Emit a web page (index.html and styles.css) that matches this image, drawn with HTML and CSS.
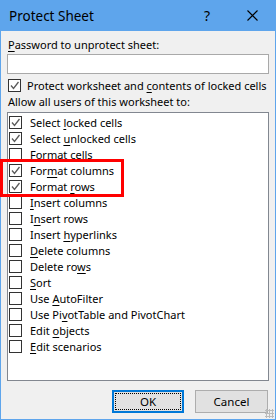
FILE: index.html
```html
<!DOCTYPE html>
<html lang="en">
<head>
    <meta charset="UTF-8">
    <title>Protect Sheet</title>
    <link rel="stylesheet" href="styles.css">
</head>
<body>
    <div class="window">
        <div class="titlebar">
            <span class="title">Protect Sheet</span>
            <span class="help">?</span>
            <svg class="close" width="11" height="11" viewBox="0 0 11 11">
                <path d="M0.5 0.5 L10.5 10.5 M10.5 0.5 L0.5 10.5" stroke="#000" stroke-width="1.1" fill="none"/>
            </svg>
        </div>

        <div class="content">
            <label class="field-label"><u>P</u>assword to unprotect sheet:</label>
            <div class="password"></div>

            <div class="check-row main-check">
                <span class="box"><svg width="11" height="11"><path d="M2 5.5 L4.5 8.5 L9.5 2" stroke="#5a5a5a" stroke-width="1.3" fill="none"/></svg></span>
                <span>Protect worksheet and <u>c</u>ontents of locked cells</span>
            </div>

            <div class="field-label allow">Allow all users of this worksheet to:</div>

            <div class="listbox">
                <div class="check-row"><span class="box"><svg width="11" height="11"><path d="M2 5.5 L4.5 8.5 L9.5 2" stroke="#5a5a5a" stroke-width="1.3" fill="none"/></svg></span><span>Select <u>l</u>ocked cells</span></div>
                <div class="check-row"><span class="box"><svg width="11" height="11"><path d="M2 5.5 L4.5 8.5 L9.5 2" stroke="#5a5a5a" stroke-width="1.3" fill="none"/></svg></span><span>Select <u>u</u>nlocked cells</span></div>
                <div class="check-row"><span class="box"></span><span>Format cells</span></div>
                <div class="highlight">
                    <div class="check-row"><span class="box"><svg width="11" height="11"><path d="M2 5.5 L4.5 8.5 L9.5 2" stroke="#5a5a5a" stroke-width="1.3" fill="none"/></svg></span><span>For<u>m</u>at columns</span></div>
                    <div class="check-row"><span class="box"><svg width="11" height="11"><path d="M2 5.5 L4.5 8.5 L9.5 2" stroke="#5a5a5a" stroke-width="1.3" fill="none"/></svg></span><span>Format <u>r</u>ows</span></div>
                </div>
                <div class="check-row"><span class="box"></span><span><u>I</u>nsert columns</span></div>
                <div class="check-row"><span class="box"></span><span>I<u>n</u>sert rows</span></div>
                <div class="check-row"><span class="box"></span><span>Insert <u>h</u>yperlinks</span></div>
                <div class="check-row"><span class="box"></span><span><u>D</u>elete columns</span></div>
                <div class="check-row"><span class="box"></span><span>Delete ro<u>w</u>s</span></div>
                <div class="check-row"><span class="box"></span><span><u>S</u>ort</span></div>
                <div class="check-row"><span class="box"></span><span>Use <u>A</u>utoFilter</span></div>
                <div class="check-row"><span class="box"></span><span>Use Pi<u>v</u>otTable and PivotChart</span></div>
                <div class="check-row"><span class="box"></span><span>Edit <u>o</u>bjects</span></div>
                <div class="check-row"><span class="box"></span><span><u>E</u>dit scenarios</span></div>
            </div>

            <div class="buttons">
                <button class="btn btn-default"><span>OK</span></button>
                <button class="btn">Cancel</button>
            </div>
        </div>
        <div class="grip"></div>
    </div>
</body>
</html>
```

FILE: styles.css
```css
body {
    margin: 0;
    font-family: "Noto Sans", sans-serif;
    font-size: 11px;
    color: #000;
}

.window {
    position: relative;
    width: 276px;
    height: 420px;
    box-sizing: border-box;
    background-color: #f0f0f0;
    border: 1px solid #5ea5ec;
    border-top: none;
}

.titlebar {
    height: 31px;
    background-color: #5ea5ec;
    display: flex;
    align-items: center;
    padding: 0 0 0 8px;
}

.title {
    font-size: 13.5px;
    flex: 1;
}

.help {
    font-size: 14px;
    width: 43px;
}

.close {
    margin-right: 17px;
}

.content {
    padding: 6px 6px 0 6px;
}

.field-label {
    display: block;
    line-height: 16px;
    padding-left: 1px;
    white-space: nowrap;
}

.password {
    margin-top: 1px;
    height: 18px;
    background-color: #fff;
    border: 1px solid #a9a9a9;
}

u {
    text-decoration-thickness: 1px;
    text-underline-offset: 2px;
}

.check-row {
    display: flex;
    align-items: center;
    height: 16px;
    gap: 8px;
    white-space: nowrap;
}

.main-check {
    margin-top: 3px;
    padding-left: 1px;
    gap: 6px;
}

.allow {
    margin-top: 1px;
}

.box {
    width: 11px;
    height: 11px;
    border: 1px solid #333;
    background-color: #fff;
    flex-shrink: 0;
}

.box svg {
    display: block;
}

.listbox {
    margin-top: 2px;
    height: 269px;
    background-color: #fff;
    border: 1px solid #828790;
    padding: 1px 0 0 1px;
    box-sizing: border-box;
}

.highlight {
    position: relative;
}

.highlight::before {
    content: "";
    position: absolute;
    left: -9px;
    top: -3px;
    width: 124px;
    height: 38px;
    border: 3px solid #f00;
    box-sizing: border-box;
}

.buttons {
    display: flex;
    justify-content: flex-end;
    gap: 11px;
    margin-top: 9px;
    padding-right: 1px;
}

.btn {
    width: 73px;
    height: 23px;
    font-family: inherit;
    font-size: 11.5px;
    background-color: #e1e1e1;
    border: 1px solid #adadad;
    padding: 0;
}

.btn-default {
    width: 72px;
    border: 2px solid #0078d7;
    padding: 1px;
}

.btn-default span {
    display: block;
    height: 100%;
    border: 1px dotted #000;
    box-sizing: border-box;
    line-height: 15px;
}

.grip {
    position: absolute;
    right: 1px;
    bottom: 1px;
    width: 9px;
    height: 9px;
    background-image: radial-gradient(circle, #bbb 1px, transparent 1.2px);
    background-size: 3px 3px;
}
```
